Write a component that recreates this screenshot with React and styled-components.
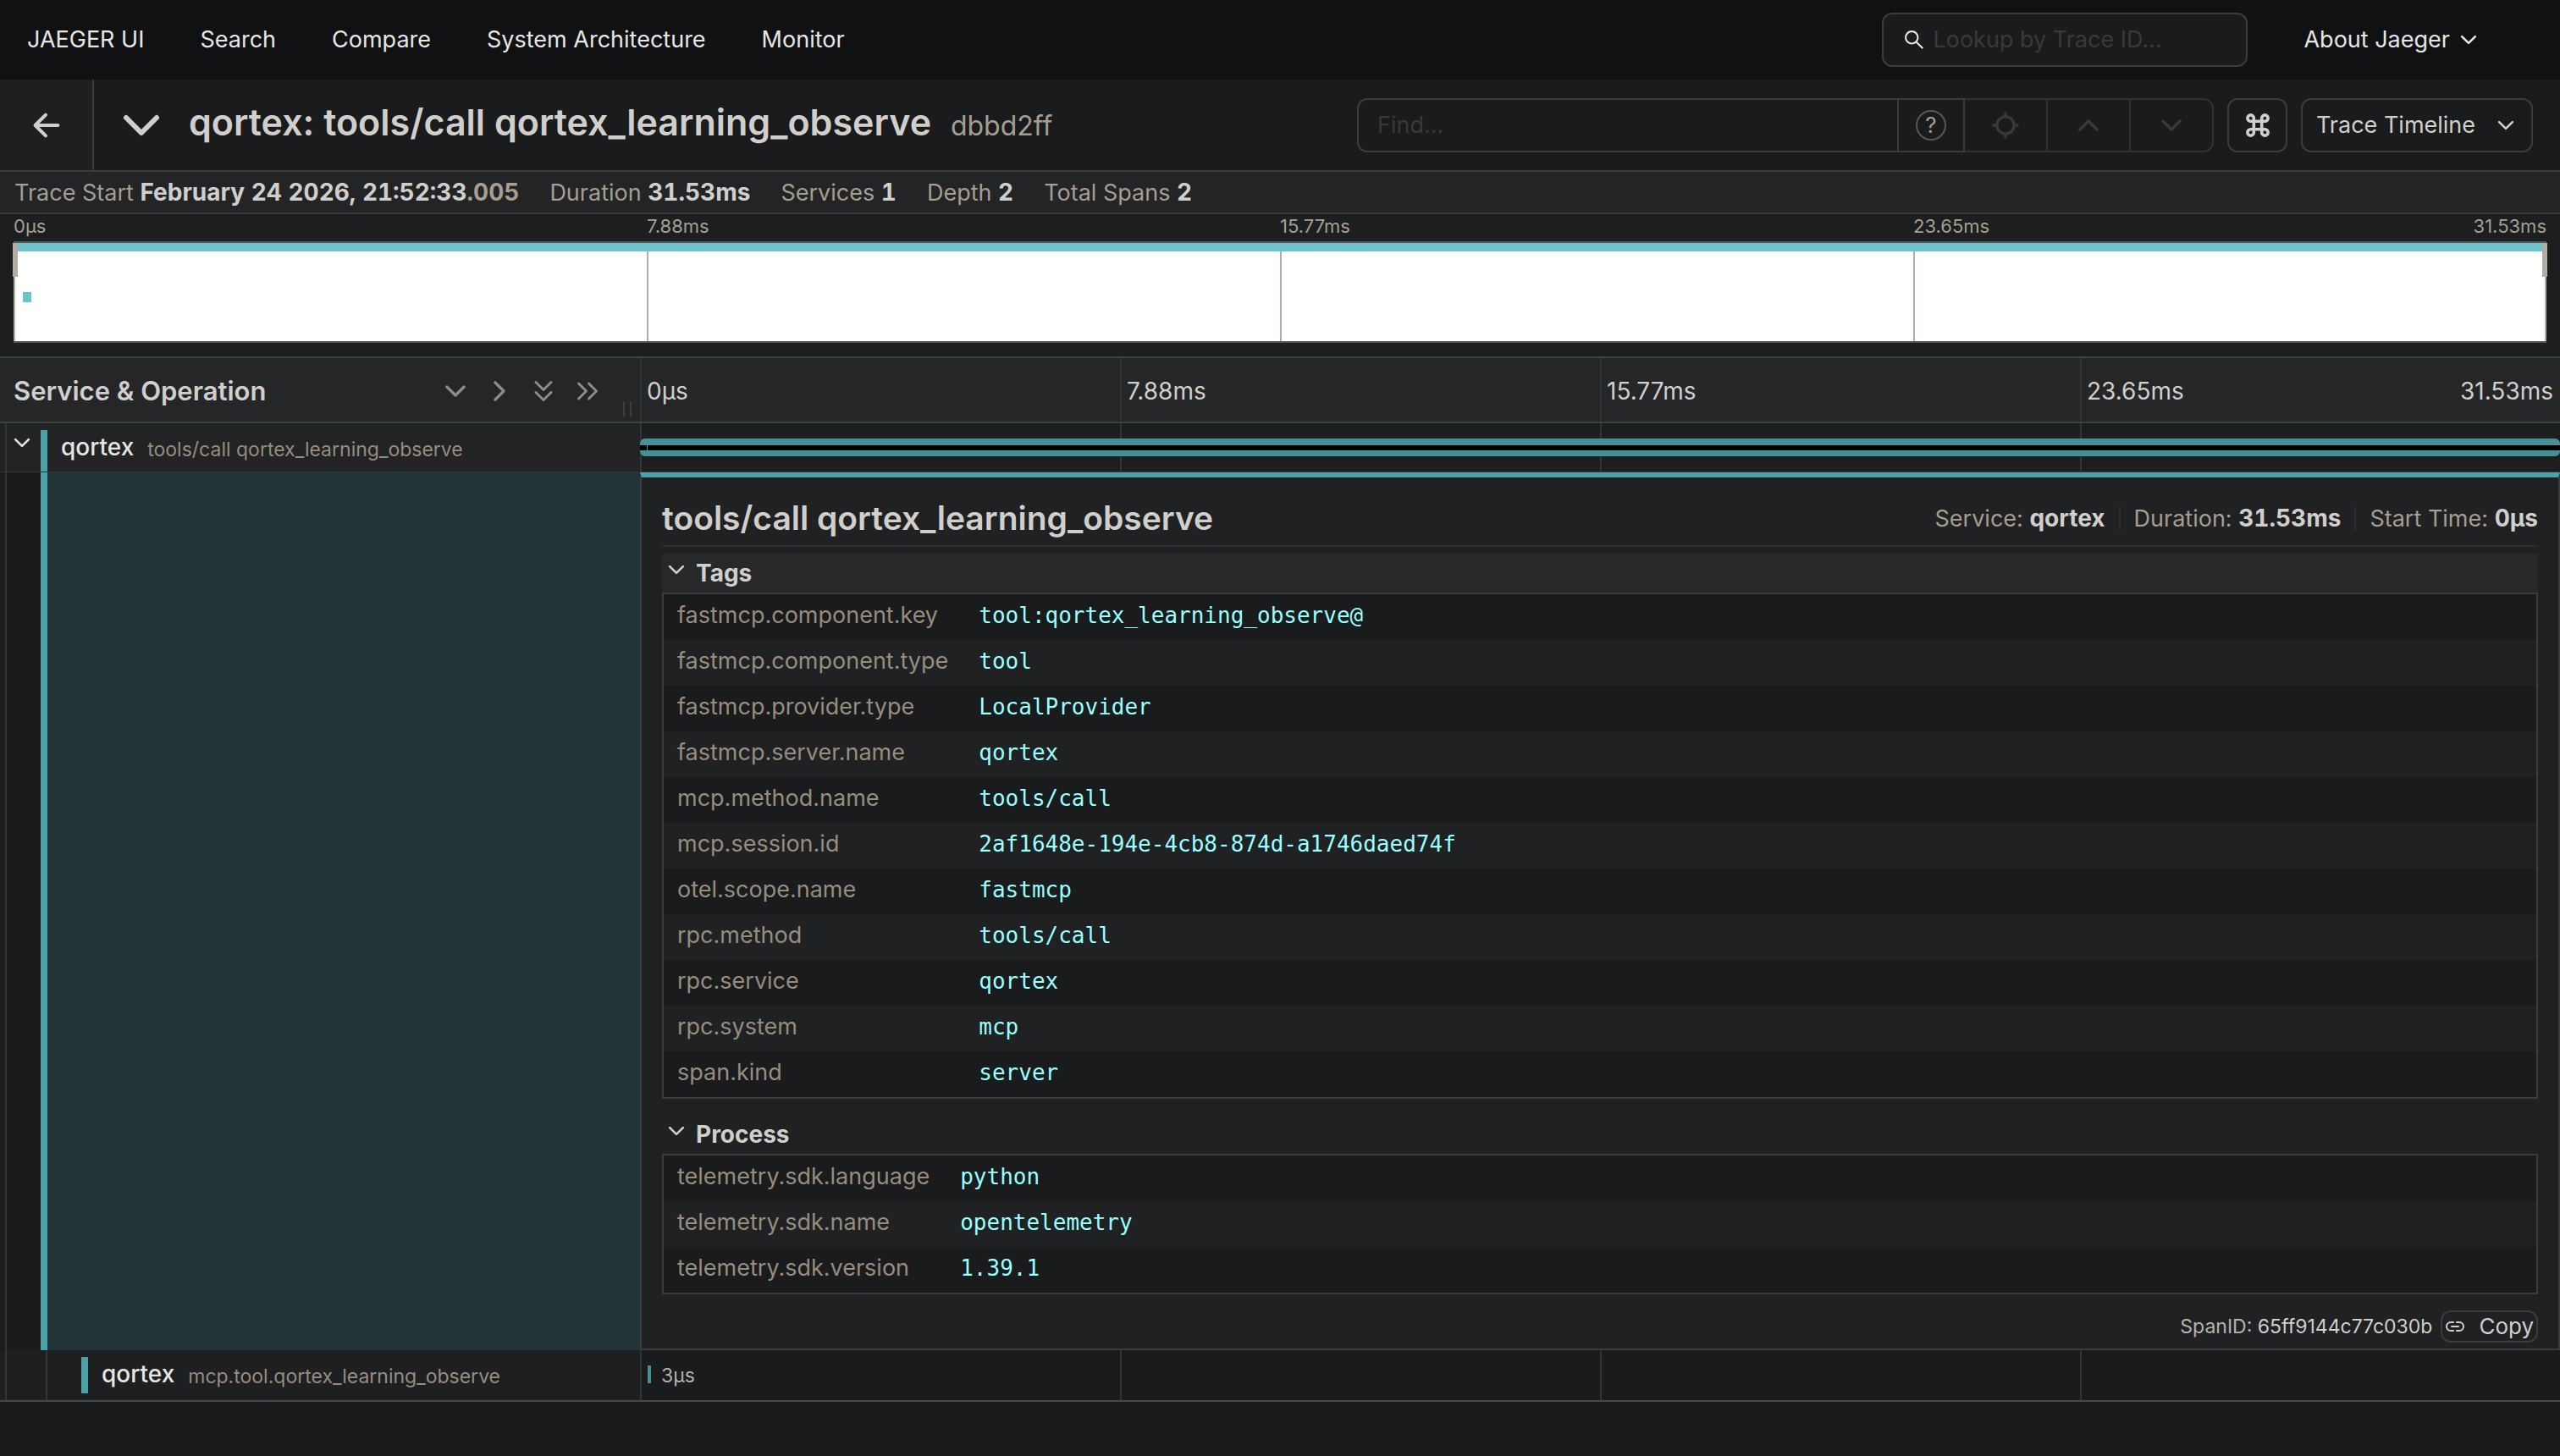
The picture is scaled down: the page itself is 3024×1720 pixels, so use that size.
import React from 'react'
import styled, { createGlobalStyle } from 'styled-components'
import { AiOutlineSearch } from 'react-icons/ai'
import { IoArrowBack, IoChevronDown, IoChevronForward, IoChevronUp, IoLocate } from 'react-icons/io5'

const tags = [
  ['fastmcp.component.key', 'tool:qortex_learning_observe@'],
  ['fastmcp.component.type', 'tool'],
  ['fastmcp.provider.type', 'LocalProvider'],
  ['fastmcp.server.name', 'qortex'],
  ['mcp.method.name', 'tools/call'],
  ['mcp.session.id', '2af1648e-194e-4cb8-874d-a1746daed74f'],
  ['otel.scope.name', 'fastmcp'],
  ['rpc.method', 'tools/call'],
  ['rpc.service', 'qortex'],
  ['rpc.system', 'mcp'],
  ['span.kind', 'server'],
]

const processTags = [
  ['telemetry.sdk.language', 'python'],
  ['telemetry.sdk.name', 'opentelemetry'],
  ['telemetry.sdk.version', '1.39.1'],
]

const ticks = ['0µs', '7.88ms', '15.77ms', '23.65ms']
const lastTick = '31.53ms'

const KeyValueSection = ({ title, rows, shaded }) => (
  <Section>
    <SectionToggle type='button' $shaded={shaded}>
      <IoChevronDown />
      <span>{title}</span>
    </SectionToggle>
    <KeyValueTable>
      <tbody>
        {rows.map(([key, value]) => (
          <tr key={key}>
            <KeyCell scope='row'>{key}</KeyCell>
            <ValueCell>{value}</ValueCell>
          </tr>
        ))}
      </tbody>
    </KeyValueTable>
  </Section>
)

const Ticks = () => (
  <>
    {ticks.map((tick, i) => (
      <Tick key={tick}>
        <span>{tick}</span>
        {i === ticks.length - 1 && <span>{lastTick}</span>}
      </Tick>
    ))}
  </>
)

export default function App() {
  return (
    <>
      <GlobalStyle />
      <Nav>
        <NavLink href='#home'>JAEGER UI</NavLink>
        <NavLink href='#search'>Search</NavLink>
        <NavLink href='#compare'>Compare</NavLink>
        <NavLink href='#architecture'>System Architecture</NavLink>
        <NavLink href='#monitor'>Monitor</NavLink>
        <Lookup>
          <AiOutlineSearch />
          <input aria-label='Lookup by Trace ID' placeholder='Lookup by Trace ID...' />
        </Lookup>
        <AboutButton type='button'>
          About Jaeger <IoChevronDown />
        </AboutButton>
      </Nav>

      <TraceHeader>
        <BackLink href='#search' aria-label='Back'>
          <IoArrowBack />
        </BackLink>
        <TitleToggle type='button' aria-label='Collapse trace details'>
          <IoChevronDown />
        </TitleToggle>
        <Title>
          qortex: tools/call qortex_learning_observe <small>dbbd2ff</small>
        </Title>
        <FindGroup>
          <FindInput aria-label='Find' placeholder='Find...' />
          <HelpButton type='button' aria-label='Search help'>
            <span>?</span>
          </HelpButton>
          <FindButton type='button' aria-label='Focus matches' disabled>
            <IoLocate />
          </FindButton>
          <FindButton type='button' aria-label='Previous match' disabled>
            <IoChevronUp />
          </FindButton>
          <FindButton type='button' aria-label='Next match' disabled>
            <IoChevronDown />
          </FindButton>
        </FindGroup>
        <ToolButton type='button' aria-label='Keyboard shortcuts'>
          <CommandIcon />
        </ToolButton>
        <ToolButton type='button' $wide>
          Trace Timeline <IoChevronDown />
        </ToolButton>
      </TraceHeader>

      <Summary>
        <li>
          Trace Start <b>February 24 2026, 21:52:33<i>.005</i></b>
        </li>
        <li>
          Duration <b>31.53ms</b>
        </li>
        <li>
          Services <b>1</b>
        </li>
        <li>
          Depth <b>2</b>
        </li>
        <li>
          Total Spans <b>2</b>
        </li>
      </Summary>

      <Minimap>
        <MinimapTicks>
          <Ticks />
        </MinimapTicks>
        <MinimapGraph>
          {ticks.map(tick => (
            <span key={tick} />
          ))}
          <MinimapSpan $top='0' $left='0' $width='100%' $height='10px' />
          <MinimapSpan $top='58px' $left='11px' $width='10px' $height='12px' />
          <Scrubber $side='left' />
          <Scrubber $side='right' />
        </MinimapGraph>
      </Minimap>

      <TimelineHeader>
        <NameHeader>
          <h2>Service &amp; Operation</h2>
          <CollapseButton type='button' aria-label='Expand one level'>
            <IoChevronDown />
          </CollapseButton>
          <CollapseButton type='button' aria-label='Collapse one level'>
            <IoChevronForward />
          </CollapseButton>
          <CollapseButton type='button' aria-label='Expand all'>
            <DoubleChevronIcon />
          </CollapseButton>
          <CollapseButton type='button' aria-label='Collapse all' $turned>
            <DoubleChevronIcon />
          </CollapseButton>
          <Resizer />
        </NameHeader>
        <TimelineTicks>
          <Ticks />
        </TimelineTicks>
      </TimelineHeader>

      <SpanRow>
        <SpanName $active>
          <Indent>
            <IoChevronDown />
          </Indent>
          <ServiceBar />
          <strong>qortex</strong>
          <small>tools/call qortex_learning_observe</small>
        </SpanName>
        <SpanTrack $active>
          {ticks.map(tick => (
            <span key={tick} />
          ))}
          <FullBar />
        </SpanTrack>
      </SpanRow>

      <DetailRow>
        <DetailGutter>
          <Indent />
          <DetailFill />
        </DetailGutter>
        <Detail>
          <DetailHeader>
            <h2>tools/call qortex_learning_observe</h2>
            <DetailFacts>
              <li>
                Service: <b>qortex</b>
              </li>
              <li>
                Duration: <b>31.53ms</b>
              </li>
              <li>
                Start Time: <b>0µs</b>
              </li>
            </DetailFacts>
          </DetailHeader>
          <KeyValueSection title='Tags' rows={tags} shaded />
          <KeyValueSection title='Process' rows={processTags} />
          <DetailFooter>
            <span>
              SpanID: <em>65ff9144c77c030b</em>
            </span>
            <CopyButton type='button'>
              <LinkIcon /> Copy
            </CopyButton>
          </DetailFooter>
        </Detail>
      </DetailRow>

      <SpanRow $last>
        <SpanName>
          <Indent />
          <Indent />
          <ServiceBar $short />
          <strong>qortex</strong>
          <small>mcp.tool.qortex_learning_observe</small>
        </SpanName>
        <SpanTrack>
          {ticks.map(tick => (
            <span key={tick} />
          ))}
          <ShortBar>3µs</ShortBar>
        </SpanTrack>
      </SpanRow>
    </>
  )
}

const CommandIcon = () => (
  <svg viewBox='0 0 28 28' width='28' height='28' fill='none' stroke='currentColor' strokeWidth='3.6'>
    <path d='M18.7 5.6v16.8a3.7 3.7 0 1 0 3.7-3.7H5.6a3.7 3.7 0 1 0 3.7 3.7V5.6a3.7 3.7 0 1 0-3.7 3.7h16.8a3.7 3.7 0 1 0-3.7-3.7' />
  </svg>
)

const DoubleChevronIcon = () => (
  <svg viewBox='0 0 36 36' fill='none' stroke='currentColor' strokeWidth='3' strokeLinecap='round' strokeLinejoin='round'>
    <path d='M9 7.5l9 9 9-9M9 19.5l9 9 9-9' />
  </svg>
)

const LinkIcon = () => (
  <svg viewBox='0 0 24 14' width='24' height='14' fill='none' stroke='currentColor' strokeWidth='2' strokeLinecap='round'>
    <path d='M10 2H7a5 5 0 0 0 0 10h3M14 2h3a5 5 0 0 1 0 10h-3M8 7h8' />
  </svg>
)

const GlobalStyle = createGlobalStyle`
  * {
    box-sizing: border-box;
  }

  body {
    margin: 0;
    background: #1a1b1c;
    color: #d1cfcb;
    font-family: Inter, 'Liberation Sans', sans-serif;
    font-size: 27px;
    line-height: 40px;
  }

  button,
  input {
    font: inherit;
    color: inherit;
    background: none;
    border: 0;
    padding: 0;
  }

  h1,
  h2,
  ul {
    margin: 0;
    padding: 0;
    list-style: none;
  }

  b {
    color: #d1cfcb;
    font-size: 28px;
    font-weight: 700;
    font-variant-numeric: tabular-nums;
  }

  svg {
    flex: none;
  }
`

const Nav = styled.nav`
  display: flex;
  align-items: center;
  height: 94px;
  padding: 0 94px 0 32px;
  gap: 66px;
  background: #101113;
  color: #e8e6e3;
`

const NavLink = styled.a`
  color: inherit;
  text-decoration: none;
`

const Lookup = styled.label`
  display: flex;
  align-items: center;
  gap: 8px;
  width: 432px;
  height: 64px;
  margin-left: auto;
  padding: 0 22px;
  border: 2px solid #3a3c3e;
  border-radius: 12px;
  background: #1a1b1c;

  svg {
    width: 28px;
    height: 28px;
  }

  input {
    flex: 1;
    min-width: 0;
  }

  input::placeholder {
    color: #38393b;
    opacity: 1;
  }
`

const AboutButton = styled.button`
  display: flex;
  align-items: center;
  gap: 8px;

  svg {
    width: 28px;
    height: 28px;
  }
`

const TraceHeader = styled.header`
  display: flex;
  align-items: center;
  height: 109px;
  padding-right: 32px;
  border-bottom: 2px solid #393b3c;
  background: #1a1b1c;
`

const BackLink = styled.a`
  display: flex;
  align-items: center;
  justify-content: center;
  align-self: stretch;
  width: 111px;
  border-right: 2px solid #393b3c;
  background: #1e1f21;
  color: #d1cfcb;
  font-size: 44px;
`

const TitleToggle = styled.button`
  display: flex;
  margin: 0 24px;
  font-size: 64px;
`

const Title = styled.h1`
  flex: 1;
  padding-bottom: 2px;
  font-size: 43px;
  font-weight: 600;
  line-height: 60px;
  white-space: nowrap;

  small {
    margin-left: 12px;
    color: #a59e91;
    font-size: 32px;
    font-weight: 400;
  }
`

const FindGroup = styled.div`
  display: flex;
  height: 64px;
  margin-right: 16px;
`

const FindInput = styled.input`
  width: 638px;
  padding: 0 22px;
  border: 2px solid #3a3c3e;
  border-right: 0;
  border-radius: 12px 0 0 12px;

  &::placeholder {
    color: #38393b;
    opacity: 1;
  }
`

const HelpButton = styled.button`
  display: flex;
  align-items: center;
  justify-content: center;
  width: 80px;
  border: 2px solid #3a3c3e;
  color: #a59e91;

  span {
    width: 36px;
    height: 36px;
    border: 2px solid #55585a;
    border-radius: 50%;
    font-size: 26px;
    line-height: 32px;
  }
`

const FindButton = styled.button`
  display: flex;
  align-items: center;
  justify-content: center;
  width: 98px;
  border: 2px solid #2f3132;
  border-left: 0;
  color: #38393b;
  font-size: 36px;

  &:last-child {
    border-radius: 0 12px 12px 0;
  }
`

const ToolButton = styled.button`
  display: flex;
  align-items: center;
  justify-content: center;
  gap: 22px;
  width: ${({ $wide }) => ($wide ? '274px' : '71px')};
  height: 64px;
  margin-right: ${({ $wide }) => ($wide ? '0' : '16px')};
  border: 2px solid #3a3c3e;
  border-radius: 12px;
  white-space: nowrap;

  svg {
    width: 28px;
    height: 28px;
  }
`

const Summary = styled.ul`
  display: flex;
  align-items: center;
  gap: 36px;
  height: 50px;
  padding: 0 17px;
  border-bottom: 2px solid #393b3c;
  background: #232425;
  color: #a59e91;

  i {
    color: #a59e91;
    font-style: normal;
  }
`

const Minimap = styled.section`
  height: 170px;
  padding: 0 16px;
  border-bottom: 2px solid #3b4444;
  background: #1d1e20;
`

const Tick = styled.div`
  display: flex;
  justify-content: space-between;
`

const MinimapTicks = styled.div`
  display: grid;
  grid-template-columns: repeat(4, 1fr);
  height: 32px;
  color: #a59e91;
  font-size: 22px;
  line-height: 28px;
`

const MinimapGraph = styled.div`
  position: relative;
  display: grid;
  grid-template-columns: repeat(4, 1fr);
  height: 120px;
  border: solid #55585a;
  border-width: 2px 0;
  background: #fff;

  > span {
    border-left: 2px solid #b3aca2;
  }

  > span:nth-of-type(4) {
    border-right: 2px solid #b3aca2;
  }
`

const MinimapSpan = styled.div`
  position: absolute;
  top: ${({ $top }) => $top};
  left: ${({ $left }) => $left};
  width: ${({ $width }) => $width};
  height: ${({ $height }) => $height};
  background: #6cc3ca;
`

const Scrubber = styled.div`
  position: absolute;
  top: 0;
  ${({ $side }) => $side}: -1px;
  width: 6px;
  height: 40px;
  background: #b3aca2;
`

const TimelineHeader = styled.section`
  display: grid;
  grid-template-columns: 1fr 3fr;
  height: 77px;
  border-bottom: 2px solid #3b4444;
  background: #252628;
`

const NameHeader = styled.div`
  position: relative;
  display: flex;
  align-items: center;
  gap: 16px;
  padding: 2px 44px 0 16px;

  h2 {
    flex: 1;
    font-size: 31px;
    font-weight: 600;
    white-space: nowrap;
  }
`

const CollapseButton = styled.button`
  display: flex;
  color: #8c8c8a;
  transform: ${({ $turned }) => ($turned ? 'rotate(-90deg)' : 'none')};

  svg {
    width: 36px;
    height: 36px;
  }
`

const Resizer = styled.div`
  position: absolute;
  right: 10px;
  bottom: 6px;
  width: 10px;
  height: 18px;
  border: solid #3a3c3e;
  border-width: 0 2px;
`

const TimelineTicks = styled.div`
  display: grid;
  grid-template-columns: repeat(4, 1fr);

  > div {
    align-items: center;
    padding: 2px 8px 0 6px;
    border-left: 2px solid #323435;
    font-size: 28px;
  }
`

const SpanRow = styled.div`
  display: grid;
  grid-template-columns: 1fr 3fr;
  height: ${({ $last }) => ($last ? '61px' : '58px')};
  border-bottom: ${({ $last }) => ($last ? '2px solid #454a4b' : '1px solid #323435')};
`

const SpanName = styled.div`
  display: flex;
  background: ${({ $active }) => ($active ? '#222324' : '#1e1f21')};
  white-space: nowrap;

  strong {
    margin: 8px 16px 0;
    color: #e8e6e3;
    font-size: 28px;
    font-weight: 500;
  }

  small {
    margin-top: 11px;
    color: #978d7f;
    font-size: 23px;
  }
`

const Indent = styled.div`
  flex: none;
  width: 42px;
  margin-left: 6px;
  border-left: 2px solid #323435;
  color: #e8e6e3;

  svg {
    display: block;
    width: 28px;
    height: 28px;
    margin: 9px 4px;
  }
`

const ServiceBar = styled.div`
  flex: none;
  width: 8px;
  margin-top: 8px;
  margin-bottom: ${({ $short }) => ($short ? '8px' : '0')};
  background: #4ca1a8;
`

const SpanTrack = styled.div`
  position: relative;
  display: grid;
  grid-template-columns: repeat(4, 1fr);
  background: ${({ $active }) => ($active ? '#1d1e20' : '#1a1b1c')};

  > span {
    border-left: 2px solid #323435;
  }
`

const FullBar = styled.div`
  position: absolute;
  top: 18px;
  left: 0;
  right: 0;
  height: 21px;
  padding-left: 8px;
  border-radius: 6px;
  background: linear-gradient(#449097 8px, #000 8px 14px, #449097 14px);

  &::before {
    content: '';
    display: block;
    width: 1px;
    height: 100%;
    background: #449097;
  }
`

const ShortBar = styled.div`
  position: absolute;
  top: 18px;
  left: 9px;
  height: 21px;
  padding-left: 12px;
  border-left: 4px solid #449097;
  color: #b5b1a8;
  font-size: 23px;
  line-height: 25px;
`

const DetailRow = styled.section`
  display: grid;
  grid-template-columns: 1fr 3fr;
`

const DetailGutter = styled.div`
  display: flex;
`

const DetailFill = styled.div`
  flex: 1;
  border-left: 8px solid #4ca1a8;
  background: #213438;
`

const Detail = styled.div`
  padding: 0 24px 7px;
  border: 2px solid #3a3c3e;
  border-top: 6px solid #4ca1a8;
  background: #202122;
`

const DetailHeader = styled.header`
  display: flex;
  align-items: center;
  justify-content: space-between;
  height: 82px;
  margin-bottom: 8px;
  padding-top: 16px;
  border-bottom: 2px solid #2b2d2e;

  h2 {
    font-size: 39px;
    font-weight: 600;
  }
`

const DetailFacts = styled.ul`
  display: flex;
  color: #a59e91;
  line-height: 26px;

  li + li {
    margin-left: 16px;
    padding-left: 16px;
    border-left: 2px solid #2b2d2e;
  }
`

const Section = styled.section`
  margin-bottom: 19px;
`

const SectionToggle = styled.button`
  display: flex;
  align-items: center;
  gap: 9px;
  width: 100%;
  height: 46px;
  padding: 0 3px;
  background: ${({ $shaded }) => ($shaded ? '#27282a' : 'none')};
  font-size: 28px;
  font-weight: 700;

  svg {
    width: 28px;
    height: 28px;
    margin-bottom: 8px;
  }
`

const KeyValueTable = styled.table`
  width: 100%;
  border: 2px solid #3a3c3e;
  border-spacing: 0;

  tr {
    height: 54px;
    background: #1a1b1c;
  }

  tr:nth-child(even) {
    background: #202122;
  }
`

const KeyCell = styled.th`
  width: 1px;
  padding: 0 20px 4px 16px;
  color: #978d7f;
  font-weight: 400;
  text-align: left;
  white-space: nowrap;
`

const ValueCell = styled.td`
  padding: 0 16px 4px;
  color: #99ffff;
  font-family: 'DejaVu Sans Mono', monospace;
  font-size: 26px;
`

const DetailFooter = styled.footer`
  display: flex;
  align-items: center;
  justify-content: flex-end;
  gap: 10px;
  color: #b8b3aa;
  font-size: 23px;
  line-height: 38px;

  em {
    color: #d1cfcb;
    font-style: normal;
  }
`

const CopyButton = styled.button`
  display: flex;
  align-items: center;
  gap: 16px;
  height: 38px;
  padding: 0 3px;
  border: 2px solid #3a3c3e;
  border-radius: 12px;
  color: #d1cfcb;
  font-size: 26px;
`
